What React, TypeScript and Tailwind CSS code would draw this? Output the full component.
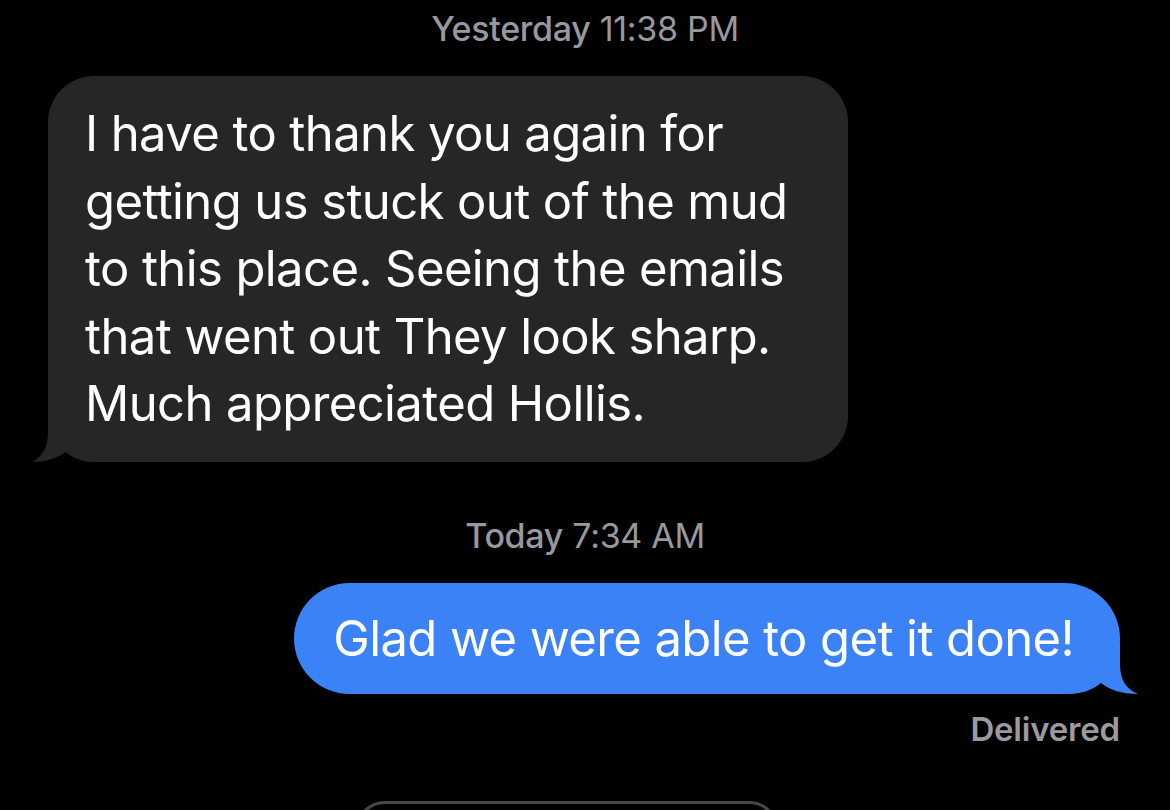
export default function App() {
  const lines = [
    "I have to thank you again for",
    "getting us stuck out of the mud",
    "to this place. Seeing the emails",
    "that went out They look sharp.",
    "Much appreciated Hollis.",
  ];

  return (
    <div className="h-[810px] w-[1170px] overflow-hidden bg-black font-['Inter','Noto_Sans',sans-serif]">
      <div className="flex flex-col">
        <div className="pt-[9px] text-center text-[34px] leading-[40px] tracking-[-0.3px] text-[#98989e]">
          <span className="font-medium">Yesterday</span> 11:38 PM
        </div>

        <div className="relative ml-[48px] mt-[27px] w-[800px] rounded-[46px] bg-[#262629] px-[37px] py-[24px]">
          <svg
            className="absolute bottom-0 left-[-16px]"
            width="70"
            height="52"
            viewBox="0 0 70 52"
          >
            <path
              d="M16 0 L16 22 C16 38 10 47 0 52 C14 52 26 48 35 41 C44 48 54 52 70 52 L70 0 Z"
              fill="#262629"
            />
          </svg>
          <div className="relative text-[49px] leading-[67.5px] tracking-[-0.6px] text-white">
            {lines.map((l, i) => (
              <div key={i} className="whitespace-nowrap">
                {l}
              </div>
            ))}
          </div>
        </div>

        <div className="mt-[54px] text-center text-[34px] leading-[40px] tracking-[-0.3px] text-[#98989e]">
          <span className="font-medium">Today</span> 7:34 AM
        </div>

        <div className="mr-[50px] mt-[27px] flex justify-end">
          <div className="relative rounded-[56px] bg-[#3a82f6] py-[22px] pl-[39px] pr-[46px]">
            <svg
              className="absolute bottom-0 right-[-18px]"
              width="70"
              height="52"
              viewBox="0 0 70 52"
            >
              <path
                d="M52 0 L52 22 C52 38 58 47 70 52 C54 52 42 48 33 41 C24 48 14 52 0 52 L0 0 Z"
                fill="#3a82f6"
              />
            </svg>
            <div className="relative whitespace-nowrap text-[49px] leading-[67.5px] tracking-[-0.6px] text-white">
              Glad we were able to get it done!
            </div>
          </div>
        </div>

        <div className="mr-[50px] mt-[15px] text-right text-[33px] font-semibold leading-[40px] tracking-[-0.2px] text-[#9a9a9f]">
          Delivered
        </div>

        <div className="ml-[355px] mt-[52px] h-[60px] w-[424px] rounded-[40px] border-[3px] border-[#48484a]" />
      </div>
    </div>
  );
}
